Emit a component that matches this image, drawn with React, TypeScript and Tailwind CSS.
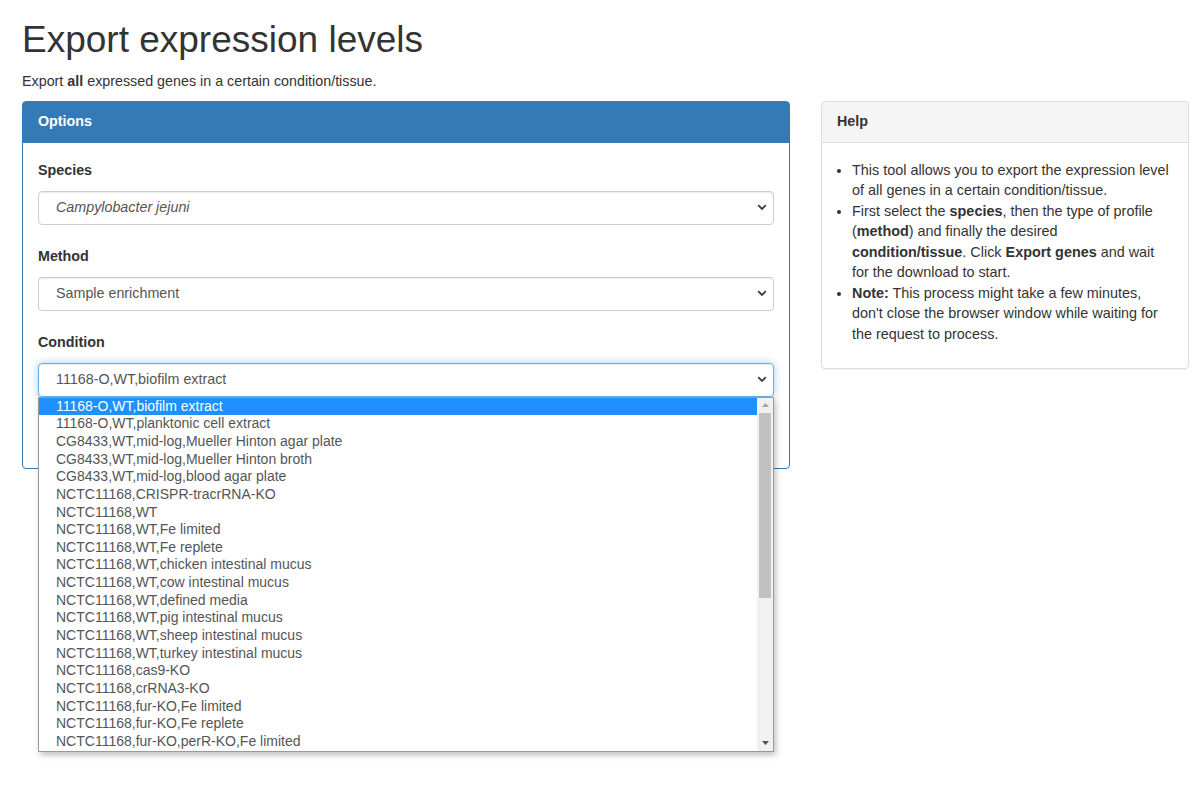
import React from "react";

const conditions = [
  "11168-O,WT,biofilm extract",
  "11168-O,WT,planktonic cell extract",
  "CG8433,WT,mid-log,Mueller Hinton agar plate",
  "CG8433,WT,mid-log,Mueller Hinton broth",
  "CG8433,WT,mid-log,blood agar plate",
  "NCTC11168,CRISPR-tracrRNA-KO",
  "NCTC11168,WT",
  "NCTC11168,WT,Fe limited",
  "NCTC11168,WT,Fe replete",
  "NCTC11168,WT,chicken intestinal mucus",
  "NCTC11168,WT,cow intestinal mucus",
  "NCTC11168,WT,defined media",
  "NCTC11168,WT,pig intestinal mucus",
  "NCTC11168,WT,sheep intestinal mucus",
  "NCTC11168,WT,turkey intestinal mucus",
  "NCTC11168,cas9-KO",
  "NCTC11168,crRNA3-KO",
  "NCTC11168,fur-KO,Fe limited",
  "NCTC11168,fur-KO,Fe replete",
  "NCTC11168,fur-KO,perR-KO,Fe limited",
];

function Chevron() {
  return (
    <svg width="10" height="7" viewBox="0 0 10 7" className="shrink-0">
      <polyline points="1.2,1.2 5,5 8.8,1.2" fill="none" stroke="#3a3a3a" strokeWidth="1.8" />
    </svg>
  );
}

function FakeSelect({ value, italic, focused }: { value: string; italic?: boolean; focused?: boolean }) {
  return (
    <div
      className={
        "h-[34px] flex items-center justify-between pl-[17px] pr-[6px] rounded-[4px] bg-white border text-[14.3px] text-[#555] " +
        (focused
          ? "border-[#66afe9] shadow-[inset_0_1px_1px_rgba(0,0,0,0.075),0_0_8px_rgba(102,175,233,0.6)]"
          : "border-[#ccc] shadow-[inset_0_1px_1px_rgba(0,0,0,0.075)]")
      }
    >
      <span className={italic ? "italic" : ""}>{value}</span>
      <Chevron />
    </div>
  );
}

function Label({ children }: { children: React.ReactNode }) {
  return <div className="font-bold text-[14.3px] leading-5 mb-[11px] text-[#333]">{children}</div>;
}

function ConditionList() {
  return (
    <div className="absolute left-0 right-0 top-full z-10 bg-white border border-[#9a9a9a] shadow-[2px_3px_6px_rgba(0,0,0,0.25)] flex">
      <div className="flex-1 h-[353px] overflow-hidden flex flex-col">
        {conditions.map((c, i) => (
          <div
            key={c}
            className={
              "h-[17.65px] shrink-0 leading-[17.65px] pl-[17px] text-[14px] whitespace-nowrap " +
              (i === 0 ? "bg-[#1e90ff] text-white" : "text-[#555]")
            }
          >
            {c}
          </div>
        ))}
      </div>
      {/* scrollbar */}
      <div className="w-[16px] h-[353px] bg-[#f1f1f1] flex flex-col items-center">
        <div className="h-[15px] flex items-center justify-center">
          <svg width="7" height="4" viewBox="0 0 7 4">
            <polygon points="0,4 3.5,0 7,4" fill="#a3a3a3" />
          </svg>
        </div>
        <div className="w-[12px] h-[185px] bg-[#c1c1c1]" />
        <div className="flex-1" />
        <div className="h-[15px] flex items-center justify-center">
          <svg width="7" height="4" viewBox="0 0 7 4">
            <polygon points="0,0 7,0 3.5,4" fill="#505050" />
          </svg>
        </div>
      </div>
    </div>
  );
}

export default function App() {
  return (
    <div className="min-h-[795px] bg-white text-[#333] pl-[22px] pt-[20px]" style={{ fontFamily: '"Liberation Sans", Arial, sans-serif' }}>
      <h1 className="text-[37px] leading-[1.1] font-normal text-[#333]">Export expression levels</h1>
      <p className="mt-[10px] text-[14.3px] leading-5">
        Export <b>all</b> expressed genes in a certain condition/tissue.
      </p>

      <div className="mt-[10px] flex items-start gap-[31px]">
        {/* Options panel */}
        <div className="w-[768px] shrink-0 border border-[#337ab7] rounded-[4px] bg-white">
          <div className="h-[41px] bg-[#337ab7] text-white font-bold text-[14.3px] flex items-center px-[15px]">Options</div>
          <div className="px-[15px] pt-[17px] pb-[16px]">
            <Label>Species</Label>
            <FakeSelect value="Campylobacter jejuni" italic />
            <div className="mt-[21px]">
              <Label>Method</Label>
              <FakeSelect value="Sample enrichment" />
            </div>
            <div className="mt-[21px] relative">
              <Label>Condition</Label>
              <div className="relative">
                <FakeSelect value="11168-O,WT,biofilm extract" focused />
                <ConditionList />
              </div>
            </div>
            <button className="mt-[21px] h-[34px] px-3 rounded-[4px] bg-[#337ab7] text-white text-[14px]">Export genes</button>
          </div>
        </div>

        {/* Help panel */}
        <div className="w-[368px] shrink-0 border border-[#ddd] rounded-[4px] bg-white shadow-[0_1px_1px_rgba(0,0,0,0.05)]">
          <div className="h-[41px] bg-[#f5f5f5] border-b border-[#ddd] font-bold text-[14.3px] flex items-center px-[15px] rounded-t-[4px]">Help</div>
          <div className="px-[15px] pt-[17px] pb-[14px]">
            <ul className="list-disc pl-[15px] text-[14.4px] leading-[20.5px] mb-[10px]">
              <li>This tool allows you to export the expression level of all genes in a certain condition/tissue.</li>
              <li>
                First select the <b>species</b>, then the type of profile (<b>method</b>) and finally the desired{" "}
                <b>condition/tissue</b>. Click <b>Export genes</b> and wait for the download to start.
              </li>
              <li>
                <b>Note:</b> This process might take a few minutes, don't close the browser window while waiting for the
                request to process.
              </li>
            </ul>
          </div>
        </div>
      </div>
    </div>
  );
}
